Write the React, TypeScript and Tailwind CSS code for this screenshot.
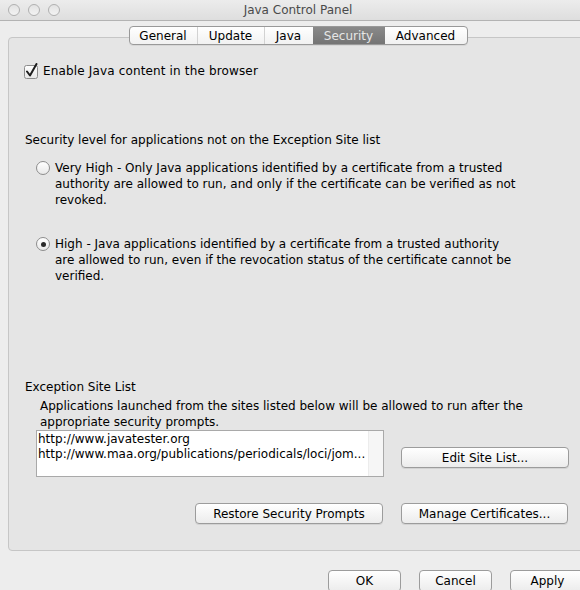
import React from 'react';

const font = "font-['DejaVu_Sans',sans-serif]";

const MacButton: React.FC<{ children: React.ReactNode; className?: string }> = ({ children, className }) => (
  <button
    className={`h-[21px] rounded-[4px] border border-[#9c9c9c] bg-gradient-to-b from-white to-[#ececec] text-[12px] leading-none text-black shadow-[0_1px_0_rgba(0,0,0,0.08)] ${className ?? ''}`}
  >
    {children}
  </button>
);

const Radio: React.FC<{ checked?: boolean }> = ({ checked }) => (
  <span className="mt-[1px] flex h-[14px] w-[14px] shrink-0 items-center justify-center rounded-full border border-[#8d8d8d] bg-gradient-to-b from-white to-[#e9e9e9]">
    {checked && <span className="h-[5px] w-[5px] rounded-full bg-[#2a2a2a]" />}
  </span>
);

const tabs = [
  { name: 'General', w: 'w-[68px]' },
  { name: 'Update', w: 'w-[67px]' },
  { name: 'Java', w: 'w-[48px]' },
  { name: 'Security', w: 'w-[72px]', active: true },
  { name: 'Advanced', w: 'w-[82px]' },
];

const App: React.FC = () => {
  return (
    <div className={`h-[590px] w-[580px] overflow-hidden bg-[#ededed] ${font} text-[12px] text-black`}>
      <div className="w-[596px]">
        {/* Title bar */}
        <header className="grid h-[21px] grid-cols-[1fr_auto_1fr] items-center border-b border-[#b3b3b3] bg-gradient-to-b from-[#ececec] to-[#dedede]">
          <div className="flex gap-[8px] pl-[8px]">
            <span className="h-[12px] w-[12px] rounded-full border border-[#b0b0b0] bg-gradient-to-b from-[#e2e2e2] to-[#f3f3f3]" />
            <span className="h-[12px] w-[12px] rounded-full border border-[#b0b0b0] bg-gradient-to-b from-[#e2e2e2] to-[#f3f3f3]" />
            <span className="h-[12px] w-[12px] rounded-full border border-[#b0b0b0] bg-gradient-to-b from-[#e2e2e2] to-[#f3f3f3]" />
          </div>
          <div className="text-[12px] text-[#4a4a4a]">Java Control Panel</div>
          <div />
        </header>

        {/* Tab panel */}
        <section className="mx-[8px] mt-[16px] flex flex-col rounded-[4px] border border-[#c6c6c6] bg-[#e5e5e5] pb-[26px]">
          <div className="-mt-[12px] flex justify-center">
            <div className="flex h-[19px] overflow-hidden rounded-[4px] border border-[#999999] bg-gradient-to-b from-white to-[#f1f1f1] shadow-[0_1px_0_rgba(0,0,0,0.06)]">
              {tabs.map((t, i) => (
                <div
                  key={t.name}
                  className={`flex items-center justify-center ${t.w} ${
                    t.active
                      ? 'bg-gradient-to-b from-[#8a8a8a] to-[#747474] text-[#e6e6e6]'
                      : 'text-black'
                  } ${i < 2 ? 'border-r border-[#d2d2d2]' : ''}`}
                >
                  {t.name}
                </div>
              ))}
            </div>
          </div>

          {/* Enable checkbox */}
          <div className="mt-[18px] flex h-[16px] items-center gap-[3px] pl-[15px]">
            <svg width="16" height="16" viewBox="0 0 16 16">
              <defs>
                <linearGradient id="cb" x1="0" y1="0" x2="0" y2="1">
                  <stop offset="0" stopColor="#ffffff" />
                  <stop offset="1" stopColor="#e6e6e6" />
                </linearGradient>
              </defs>
              <rect x="0.5" y="2.5" width="13" height="13" rx="2" fill="url(#cb)" stroke="#8c8c8c" />
              <path d="M3 8.5 L6 12.5 L12.5 1" fill="none" stroke="#1e1e1e" strokeWidth="2" strokeLinecap="round" strokeLinejoin="round" />
            </svg>
            <span className="tracking-[0.15px]">Enable Java content in the browser</span>
          </div>

          <div className="mt-[53px] pl-[16px] leading-[16px]">
            Security level for applications not on the Exception Site list
          </div>

          <div className="mt-[12px] flex gap-[5px] pl-[27px] leading-[16px]">
            <Radio />
            <div>
              Very High - Only Java applications identified by a certificate from a trusted
              <br />
              authority are allowed to run, and only if the certificate can be verified as not
              <br />
              revoked.
            </div>
          </div>

          <div className="mt-[28px] flex gap-[5px] pl-[27px] leading-[16px]">
            <Radio checked />
            <div>
              High - Java applications identified by a certificate from a trusted authority
              <br />
              are allowed to run, even if the revocation status of the certificate cannot be
              <br />
              verified.
            </div>
          </div>

          {/* Exception Site List */}
          <div className="mt-[95px] pl-[16px] leading-[16px]">Exception Site List</div>
          <div className="mt-[3px] pl-[31px] leading-[16px]">
            Applications launched from the sites listed below will be allowed to run after the
            <br />
            appropriate security prompts.
          </div>

          <div className="flex items-start pl-[27px]">
            <div className="flex h-[47px] w-[348px] border border-[#a9a9a9] bg-white">
              <div className="flex-1 overflow-hidden pl-[1px] pt-[1px] text-[12px] leading-[15px]">
                <div>http://www.javatester.org</div>
                <div className="whitespace-nowrap">http://www.maa.org/publications/periodicals/loci/jom...</div>
              </div>
              <div className="w-[15px] shrink-0 border-l border-[#ececec] bg-[#f6f6f6]" />
            </div>
            <MacButton className="ml-[17px] mt-[17px] w-[168px]">Edit Site List...</MacButton>
          </div>

          <div className="mt-[26px] flex justify-end gap-[18px] pr-[19px]">
            <MacButton className="w-[188px]">Restore Security Prompts</MacButton>
            <MacButton className="w-[167px]">Manage Certificates...</MacButton>
          </div>
        </section>

        {/* Dialog buttons */}
        <div className="mt-[19px] flex justify-end gap-[18px] pr-[11px]">
          <MacButton className="h-[22px] w-[73px]">OK</MacButton>
          <MacButton className="h-[22px] w-[73px]">Cancel</MacButton>
          <MacButton className="h-[22px] w-[75px]">Apply</MacButton>
        </div>
      </div>
    </div>
  );
};

export default App;
